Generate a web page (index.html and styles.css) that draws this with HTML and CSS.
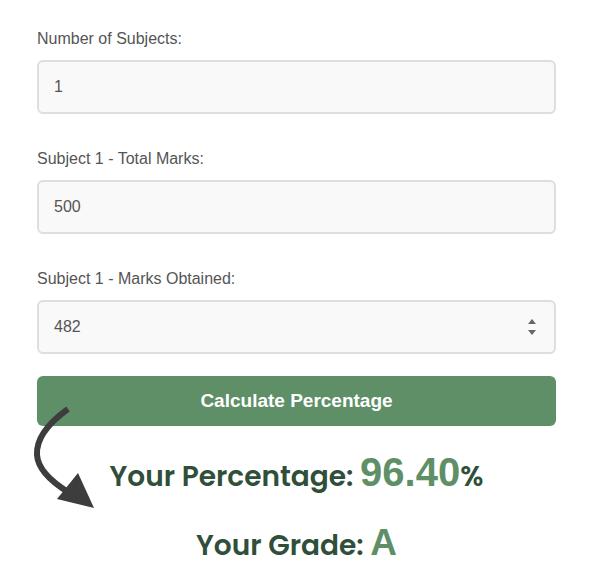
FILE: index.html
```html
<!DOCTYPE html>
<html lang="en">
<head>
  <meta charset="UTF-8">
  <meta name="viewport" content="width=device-width, initial-scale=1.0">
  <title>Percentage Calculator</title>
  <link rel="stylesheet" href="styles.css">
</head>
<body>
  <div class="container">
    <div class="field">
      <label for="subjects">Number of Subjects:</label>
      <input id="subjects" type="text" value="1">
    </div>
    <div class="field">
      <label for="total-1">Subject 1 - Total Marks:</label>
      <input id="total-1" type="text" value="500">
    </div>
    <div class="field last">
      <label for="obtained-1">Subject 1 - Marks Obtained:</label>
      <div class="number-input">
        <input id="obtained-1" type="text" value="482">
        <span class="spinner">
          <svg width="10" height="22" viewBox="0 0 10 22">
            <path d="M1 8 L5 3 L9 8 Z" fill="#666"/>
            <path d="M1 14 L5 19 L9 14 Z" fill="#666"/>
          </svg>
        </span>
      </div>
    </div>
    <button class="calculate">Calculate Percentage</button>
    <div class="results">
      <p class="result-line">Your Percentage: <span class="value">96.40</span><span class="unit">%</span></p>
      <p class="result-line">Your Grade: <span class="value grade">A</span></p>
    </div>
    <!-- pointer arrow drawn over the button -->
    <svg class="arrow" width="120" height="120" viewBox="0 0 120 120">
      <path d="M68 9 C 50 22, 36 38, 37 55 C 38 70, 52 82, 68 92" fill="none" stroke="#3d3d3d" stroke-width="6"/>
      <path d="M78 73 L57 99 L94 108 Z" fill="#3d3d3d"/>
    </svg>
  </div>
</body>
</html>
```

FILE: styles.css
```css
body {
  font-family: "Liberation Sans", Arial, sans-serif;
  margin: 0;
  padding: 0;
  background-color: #ffffff;
}

.container {
  position: relative;
  width: 519px;
  margin: 0 auto;
  padding-top: 30px;
}

.field {
  margin-bottom: 36px;
}

.field.last {
  margin-bottom: 22px;
}

.field label {
  display: block;
  font-size: 16px;
  line-height: 17px;
  color: #555;
  margin-bottom: 13px;
}

.field input {
  box-sizing: border-box;
  width: 100%;
  height: 54px;
  padding: 0 15px;
  border: 2px solid #dedede;
  border-radius: 6px;
  background-color: #f9f9f9;
  font-family: "Liberation Sans", Arial, sans-serif;
  font-size: 16px;
  color: #555;
}

.number-input {
  position: relative;
}

.spinner {
  position: absolute;
  right: 19px;
  top: 16px;
}

.calculate {
  display: block;
  width: 100%;
  height: 50px;
  border: none;
  border-radius: 6px;
  background-color: #5e8f67;
  color: #fff;
  font-family: "Liberation Sans", Arial, sans-serif;
  font-size: 19px;
  font-weight: bold;
}

.results {
  text-align: center;
  padding-top: 22px;
}

.result-line {
  margin: 0 0 18px;
  line-height: 48px;
  font-family: "Poppins", "Lato", sans-serif;
  font-size: 28px;
  font-weight: 600;
  color: #2f4f3a;
}

.result-line .value {
  font-family: "Liberation Sans", Arial, sans-serif;
  font-size: 40px;
  font-weight: bold;
  color: #5e8f67;
}

.result-line .grade {
  font-size: 37px;
}

.result-line .unit {
  font-size: 28px;
  color: #2f4f3a;
}

.arrow {
  position: absolute;
  left: -37px;
  top: 400px;
}
```
